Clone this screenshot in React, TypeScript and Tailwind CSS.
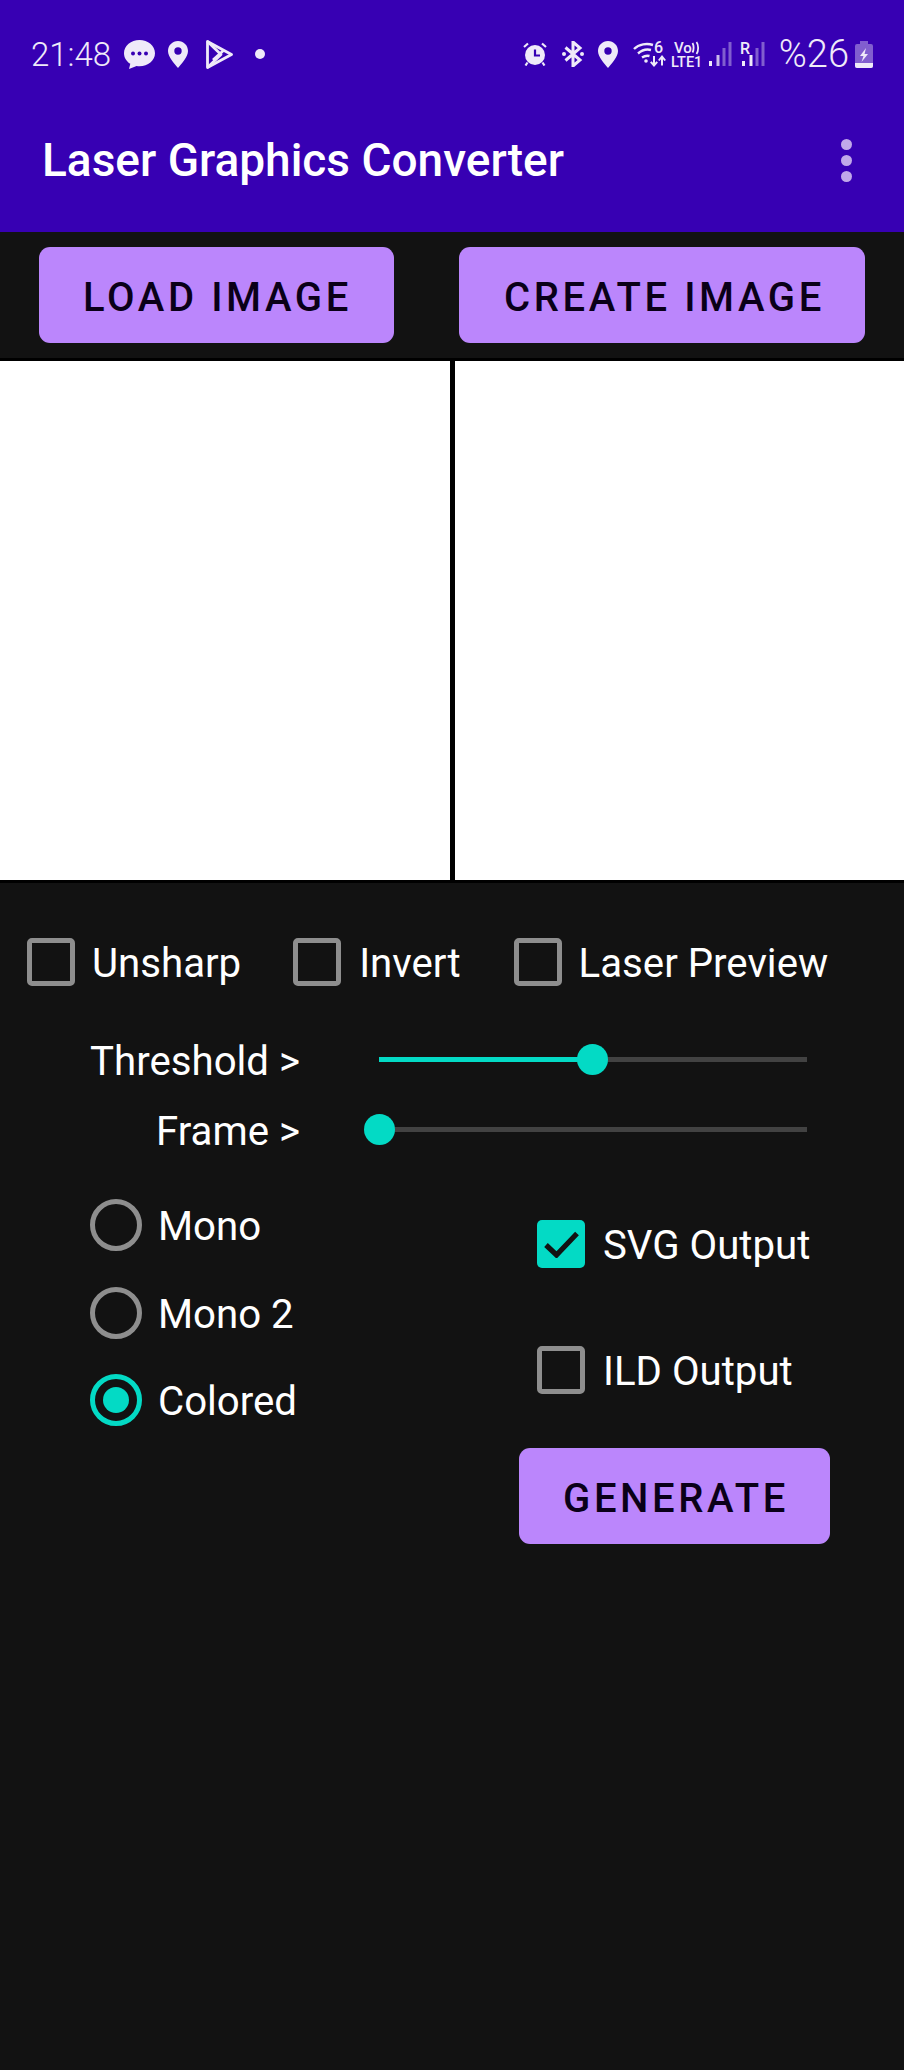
const statusColor = '#efeaf9';
const headerColor = '#3700b3';

function ChatIcon() {
  return (
    <svg width="31" height="29" viewBox="0 0 31 29" className="ml-[13px]">
      <path d="M15.500 0C7 0 0 5.800 0 13.200c0 4.400 2.500 8.200 6.300 10.600L5 29l7.600-3c1 .2 1.900.2 2.900.2 8.500 0 15.500-5.700 15.500-13C31 5.800 24 0 15.500 0z" fill={statusColor} />
      <circle cx="9" cy="13.500" r="2" fill={headerColor} />
      <circle cx="15.500" cy="13.500" r="2" fill={headerColor} />
      <circle cx="22" cy="13.500" r="2" fill={headerColor} />
    </svg>
  );
}

function PinIcon({ className }: { className: string }) {
  return (
    <svg width="20" height="27" viewBox="0 0 20 27" className={className}>
      <path
        fillRule="evenodd"
        d="M10 0C4.400 0 0 4.400 0 10c0 5.800 6.300 12.500 10 17 3.700-4.500 10-11.200 10-17C20 4.400 15.600 0 10 0zm0 6.300a3.700 3.700 0 1 1 0 7.400 3.700 3.700 0 0 1 0-7.400z"
        fill={statusColor}
      />
    </svg>
  );
}

function PlayIcon() {
  return (
    <svg width="27" height="29" viewBox="0 0 27 29" className="ml-[18px]" fill="none" stroke={statusColor} strokeWidth="2.800" strokeLinejoin="round">
      <path d="M1.500 1.500v26L25.500 14.500z" />
      <path d="M1.500 1.500 15 14.500 1.500 27.500" />
      <path d="M7 20 18 10" />
    </svg>
  );
}

function AlarmIcon() {
  return (
    <svg width="24" height="24" viewBox="0 0 24 24">
      <circle cx="12" cy="13" r="10" fill={statusColor} />
      <path d="M12 7.500V13.500H17" fill="none" stroke={headerColor} strokeWidth="2.200" />
      <path d="M1 5 5 1.500M23 5 19 1.500M4.500 20.500 2.500 23.500M19.500 20.500 21.500 23.500" stroke={statusColor} strokeWidth="2.200" fill="none" />
    </svg>
  );
}

function BluetoothIcon() {
  return (
    <svg width="22" height="26" viewBox="0 0 22 26" className="ml-[15px]">
      <path d="M3.500 6.500 18 19 11 25V1l7 6L3.500 19.500" fill="none" stroke={statusColor} strokeWidth="3" />
      <circle cx="2" cy="13" r="2" fill={statusColor} />
      <circle cx="20" cy="13" r="2" fill={statusColor} />
    </svg>
  );
}

function WifiIcon() {
  return (
    <svg width="33" height="26" viewBox="0 0 33 26" className="ml-[15px] overflow-visible">
      <path d="M1 8C6 3 14 2 20 4M5 12.500C9 9 14 8 18 9M9 16.500C11.500 14.800 14 14.300 16.500 15" fill="none" stroke={statusColor} strokeWidth="2.400" />
      <circle cx="13" cy="20" r="1.800" fill={statusColor} />
      <text x="21" y="12" fontSize="16" fontWeight="500" fontFamily="Roboto, sans-serif" fill={statusColor}>6</text>
      <path d="M21 15v9M17.800 20.800 21 24.500l3.200-3.700M29 24.500V16M25.800 19.500 29 15.500l3.200 4" fill="none" stroke={statusColor} strokeWidth="2" />
    </svg>
  );
}

function VoLteIcon() {
  return (
    <svg width="32" height="26" viewBox="0 0 32 26" className="ml-[5px] overflow-visible">
      <text x="3" y="12" fontSize="15" fontWeight="500" fontFamily="Roboto, sans-serif" fill={statusColor}>Vo</text>
      <path d="M21.500 2c1.500 2.500 1.500 7 0 9.500M25.500 1c2.200 3 2.200 9 0 12" fill="none" stroke={statusColor} strokeWidth="1.800" />
      <text x="0" y="26" fontSize="14.500" fontWeight="500" fontFamily="Roboto, sans-serif" fill={statusColor}>LTE1</text>
    </svg>
  );
}

function SignalIcon({ roaming, className }: { roaming?: boolean; className: string }) {
  return (
    <svg width="24" height="24" viewBox="0 0 24 24" className={`${className} overflow-visible`}>
      {roaming && (
        <text x="-1" y="11.500" fontSize="16" fontWeight="500" fontFamily="Roboto, sans-serif" fill={statusColor}>R</text>
      )}
      <rect x="1" y="19" width="3" height="5" fill={statusColor} />
      <rect x="8.500" y="13" width="3" height="11" fill={statusColor} opacity={roaming ? 1 : 0.8} />
      <rect x="14.500" y="6" width="3" height="18" fill={statusColor} opacity="0.4" />
      <rect x="20.500" y="0" width="3" height="24" fill={statusColor} opacity="0.4" />
    </svg>
  );
}

function BatteryIcon() {
  return (
    <svg width="18" height="27" viewBox="0 0 18 27" className="ml-[6px]">
      <path d="M5 0h8v3h3a2 2 0 0 1 2 2v20a2 2 0 0 1-2 2H2a2 2 0 0 1-2-2V5a2 2 0 0 1 2-2h3z" fill={statusColor} opacity="0.4" />
      <path d="M0 22h18v3a2 2 0 0 1-2 2H2a2 2 0 0 1-2-2z" fill={statusColor} />
      <path d="M11 7 5 15h3.500L6.500 21l6.500-8H9.500z" fill={statusColor} />
    </svg>
  );
}

function Checkbox({ checked, className }: { checked?: boolean; className?: string }) {
  if (checked) {
    return (
      <div className={`flex h-[48px] w-[48px] shrink-0 items-center justify-center rounded-[5px] bg-[#03dac5] ${className ?? ''}`}>
        <svg width="35" height="27" viewBox="0 0 35 27" fill="none">
          <path d="M2 14 12.500 24 33 2.500" stroke="#121212" strokeWidth="5.200" />
        </svg>
      </div>
    );
  }
  return <div className={`h-[48px] w-[48px] shrink-0 rounded-[5px] border-[5.500px] border-[#8e8e8e] ${className ?? ''}`} />;
}

function Label({ text, className }: { text: string; className?: string }) {
  return <span className={`pt-[5px] text-[40.200px] leading-none text-white ${className ?? ''}`}>{text}</span>;
}

function Radio({ label, checked }: { label: string; checked?: boolean }) {
  return (
    <div className="flex h-[52px] items-center">
      <div className={`flex h-[52px] w-[52px] items-center justify-center rounded-full border-[5.500px] ${checked ? 'border-[#03dac5]' : 'border-[#8e8e8e]'}`}>
        {checked && <div className="h-[26px] w-[26px] rounded-full bg-[#03dac5]" />}
      </div>
      <Label text={label} className="ml-[16px]" />
    </div>
  );
}

function ActionButton({ label, className }: { label: string; className: string }) {
  return (
    <button className={`flex h-[96px] items-center justify-center rounded-[11px] bg-[#bb86fc] pt-[5px] text-[40px] font-medium tracking-[3.600px] text-[#0a0018] ${className}`}>
      {label}
    </button>
  );
}

function SliderRow({ label, percent }: { label: string; percent: number }) {
  return (
    <div className="flex h-[70px] items-center">
      <div className="mt-[2px] flex w-[300px] justify-end">
        <Label text={label} />
      </div>
      <div className="relative ml-[79px] h-[5px] w-[428px] bg-[#424242]">
        <div className="h-full bg-[#03dac5]" style={{ width: `${percent}%` }} />
        <div
          className="absolute top-[-13px] ml-[-15px] h-[31px] w-[31px] rounded-full bg-[#03dac5]"
          style={{ left: `${percent}%` }}
        />
      </div>
    </div>
  );
}

export default function App() {
  return (
    <div className="h-[2070px] w-full overflow-hidden bg-[#121212] font-['Roboto',sans-serif]">
      {/* 状态栏 + 标题栏 */}
      <header className="h-[232px] bg-[#3700b3]">
        <div className="flex h-[108px] items-center pl-[31px] pr-[31px]">
          <span className="text-[33px] font-light leading-none text-[#efeaf9]">21:48</span>
          <ChatIcon />
          <PinIcon className="ml-[13px]" />
          <PlayIcon />
          <div className="ml-[22px] h-[10px] w-[10px] rounded-full bg-[#efeaf9]" />
          <div className="ml-auto flex items-center">
            <AlarmIcon />
            <BluetoothIcon />
            <PinIcon className="ml-[14px]" />
            <WifiIcon />
            <VoLteIcon />
            <SignalIcon className="ml-[5px]" />
            <SignalIcon roaming className="ml-[9px]" />
            <span className="ml-[14px] text-[38px] font-light leading-none text-[#efeaf9]">%26</span>
            <BatteryIcon />
          </div>
        </div>
        <div className="flex h-[104px] items-center justify-between pl-[42px] pr-[52px]">
          <h1 className="text-[46px] font-medium leading-none text-white">Laser Graphics Converter</h1>
          <div className="flex flex-col gap-[5px]">
            <div className="h-[11px] w-[11px] rounded-full bg-[#c1a8ea]" />
            <div className="h-[11px] w-[11px] rounded-full bg-[#c1a8ea]" />
            <div className="h-[11px] w-[11px] rounded-full bg-[#c1a8ea]" />
          </div>
        </div>
      </header>

      {/* 按钮 */}
      <div className="flex h-[126px] pl-[39px] pt-[15px]">
        <ActionButton label="LOAD IMAGE" className="w-[355px] pl-[2px]" />
        <ActionButton label="CREATE IMAGE" className="ml-[65px] w-[406px] pl-[5px]" />
      </div>

      {/* 图片预览 */}
      <div className="flex h-[525px] gap-[5px] border-y-[3px] border-black bg-black">
        <div className="w-[450px] bg-white" />
        <div className="flex-1 bg-white" />
      </div>

      {/* 选项 */}
      <div className="mt-[55px] flex items-center pl-[27px]">
        <Checkbox />
        <Label text="Unsharp" className="ml-[17px]" />
        <Checkbox className="ml-[52px]" />
        <Label text="Invert" className="ml-[18px]" />
        <Checkbox className="ml-[53px]" />
        <Label text="Laser Preview" className="ml-[17px]" />
      </div>

      <div className="mt-[38px]">
        <SliderRow label="Threshold >" percent={49.8} />
        <SliderRow label="Frame >" percent={0} />
      </div>

      <div className="flex">
        <div className="flex w-[519px] flex-col gap-[35.500px] pl-[90px] pt-[35px]">
          <Radio label="Mono" />
          <Radio label="Mono 2" />
          <Radio label="Colored" checked />
        </div>
        <div className="pt-[56px]">
          <div className="flex items-center pl-[18px]">
            <Checkbox checked />
            <Label text="SVG Output" className="ml-[18px]" />
          </div>
          <div className="mt-[78px] flex items-center pl-[18px]">
            <Checkbox />
            <Label text="ILD Output" className="ml-[18px]" />
          </div>
          <ActionButton label="GENERATE" className="mt-[54px] w-[311px] pl-[3px]" />
        </div>
      </div>
    </div>
  );
}
